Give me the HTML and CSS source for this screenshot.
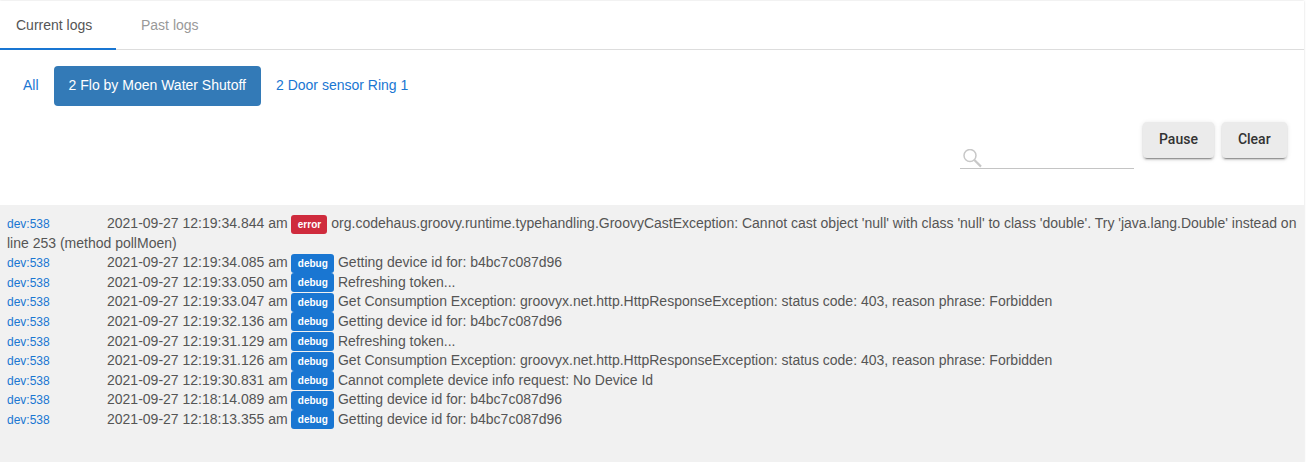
FILE: index.html
```html
<!DOCTYPE html>
<html lang="en">
<head>
<meta charset="utf-8">
<title>Logs</title>
<link rel="stylesheet" href="styles.css">
</head>
<body>
<main class="page">
  <nav class="tabs">
    <a class="tab tab-active">Current logs</a>
    <a class="tab">Past logs</a>
  </nav>
  <div class="pills">
    <a class="pill">All</a>
    <a class="pill pill-active">2 Flo by Moen Water Shutoff</a>
    <a class="pill">2 Door sensor Ring 1</a>
  </div>
  <div class="tools">
    <label class="search">
      <svg class="search-icon" viewBox="0 0 20 20" width="20" height="20"><circle cx="7" cy="6.5" r="6" fill="none" stroke="#c8c8c8" stroke-width="1.5"/><path d="M11.4 11 L18 17.6" stroke="#c8c8c8" stroke-width="2.2" fill="none"/></svg>
    </label>
    <button class="btn">Pause</button>
    <button class="btn">Clear</button>
  </div>
  <section class="logs">
    <div class="log"><a class="dev">dev:538</a><span class="time">2021-09-27 12:19:34.844 am</span> <span class="badge badge-error">error</span> org.codehaus.groovy.runtime.typehandling.GroovyCastException: Cannot cast object 'null' with class 'null' to class 'double'. Try 'java.lang.Double' instead on line 253 (method pollMoen)</div>
    <div class="log"><a class="dev">dev:538</a><span class="time">2021-09-27 12:19:34.085 am</span> <span class="badge">debug</span> Getting device id for: b4bc7c087d96</div>
    <div class="log"><a class="dev">dev:538</a><span class="time">2021-09-27 12:19:33.050 am</span> <span class="badge">debug</span> Refreshing token...</div>
    <div class="log"><a class="dev">dev:538</a><span class="time">2021-09-27 12:19:33.047 am</span> <span class="badge">debug</span> Get Consumption Exception: groovyx.net.http.HttpResponseException: status code: 403, reason phrase: Forbidden</div>
    <div class="log"><a class="dev">dev:538</a><span class="time">2021-09-27 12:19:32.136 am</span> <span class="badge">debug</span> Getting device id for: b4bc7c087d96</div>
    <div class="log"><a class="dev">dev:538</a><span class="time">2021-09-27 12:19:31.129 am</span> <span class="badge">debug</span> Refreshing token...</div>
    <div class="log"><a class="dev">dev:538</a><span class="time">2021-09-27 12:19:31.126 am</span> <span class="badge">debug</span> Get Consumption Exception: groovyx.net.http.HttpResponseException: status code: 403, reason phrase: Forbidden</div>
    <div class="log"><a class="dev">dev:538</a><span class="time">2021-09-27 12:19:30.831 am</span> <span class="badge">debug</span> Cannot complete device info request: No Device Id</div>
    <div class="log"><a class="dev">dev:538</a><span class="time">2021-09-27 12:18:14.089 am</span> <span class="badge">debug</span> Getting device id for: b4bc7c087d96</div>
    <div class="log"><a class="dev">dev:538</a><span class="time">2021-09-27 12:18:13.355 am</span> <span class="badge">debug</span> Getting device id for: b4bc7c087d96</div>
  </section>
</main>
</body>
</html>
```
FILE: styles.css
```css
* { box-sizing: border-box; }
html, body { margin: 0; height: 100%; }
body {
  background: #fff;
  font-family: "Liberation Sans", Arial, sans-serif;
  font-size: 14px;
  line-height: 20px;
  color: #555;
  overflow: hidden;
}
.page {
  width: 1304px;
  height: 462px;
  margin-top: 1px;
  background: #fff;
  display: flex;
  flex-direction: column;
  box-shadow: 0 0 2px rgba(0,0,0,.16);
}
.tabs {
  display: flex;
  height: 49px;
  flex: none;
  border-bottom: 1px solid #ddd;
}
.tab {
  width: 116px;
  height: 49px;
  padding: 14px 0 0 16px;
  color: #999;
}
.tab + .tab { padding-left: 25px; }
.tab-active {
  color: #555;
  border-bottom: 2px solid #1976d2;
}
.pills {
  display: flex;
  padding: 16px 8px 0;
  height: 72px;
  flex: none;
}
.pill {
  height: 40px;
  padding: 9px 15px;
  color: #1976d2;
  border-radius: 4px;
}
.pill-active {
  background: #337ab7;
  color: #fff;
}
.tools {
  display: flex;
  align-items: flex-start;
  height: 83px;
  flex: none;
  padding-left: 960px;
}
.search {
  display: block;
  width: 174px;
  height: 47px;
  border-bottom: 1px solid #c4c4c4;
  padding: 27px 0 0 3px;
  margin-right: 9px;
}
.search-icon { display: block; }
.btn {
  height: 36px;
  padding: 0 16px 2px;
  margin-right: 8px;
  background: #ebebeb;
  border: 0;
  border-radius: 4px;
  color: #333;
  font: 500 14px/20px Roboto, sans-serif;
  box-shadow: 0 3px 1px -2px rgba(0,0,0,.3), 0 2px 2px 0 rgba(0,0,0,.14), 0 1px 5px 0 rgba(0,0,0,.12);
}
.logs {
  flex: 1;
  background: #f1f1f1;
  padding: 9px 7px 0 7px;
}
.log { line-height: 19.6px; }
.dev {
  display: inline-block;
  width: 100px;
  height: 19px;
  font-size: 12px;
  line-height: 21px;
  color: #1976d2;
  vertical-align: top;
}
.time { vertical-align: top; }
.badge {
  display: inline-block;
  height: 19px;
  margin-top: 0.5px;
  padding: 0 6.3px;
  background: #1976d2;
  color: #fff;
  border-radius: 3px;
  font-size: 10px;
  font-weight: 700;
  line-height: 20px;
  vertical-align: top;
}
.badge-error { background: #cf2b3d; }
```
